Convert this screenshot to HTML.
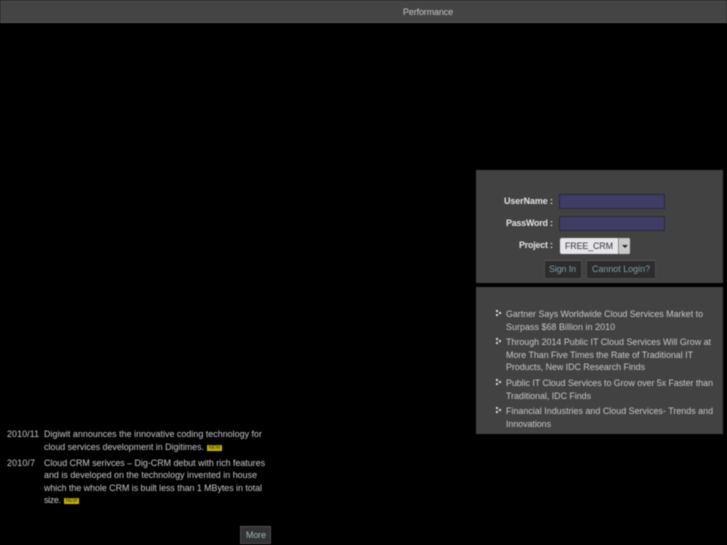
<!DOCTYPE html>
<html><head><meta charset="utf-8">
<style>
html,body{margin:0;padding:0;background:#000;}
body{width:727px;height:545px;position:relative;overflow:hidden;font-family:"Liberation Sans",sans-serif;filter:blur(.4px);}
.b{position:absolute;}
.n{position:absolute;width:15px;height:6px;line-height:6px;background:#c8b400;font-size:5px;font-weight:bold;color:#5c5200;text-align:center;overflow:hidden;}
.btn{position:absolute;background:#2c2c2c;border:1px solid #4a4a4a;border-top-color:#555;box-sizing:border-box;}
.d{position:absolute;width:2px;height:2px;background:#ddd;}
svg{position:absolute;left:0;top:0;}
text{font-family:"Liberation Sans",sans-serif;font-size:8.9px;fill:#c8c8c8;}
.lb{font-weight:bold;fill:#e4e4e4;}
.bt{fill:#7f9fa8;}
</style></head><body>
<div class="b" style="left:0;top:0;width:727px;height:22px;background:#444;border-bottom:1px solid #5a5a5a;"></div>

<div class="b" style="left:476px;top:170px;width:247px;height:113px;background:#424242;"></div>
<div class="b" style="left:559px;top:194px;width:106px;height:15px;background:#3f3d66;border:1px solid #2a2a3a;box-sizing:border-box;"></div>
<div class="b" style="left:559px;top:216px;width:106px;height:15px;background:#3f3d66;border:1px solid #2a2a3a;box-sizing:border-box;"></div>
<div class="b" style="left:560px;top:238px;width:70px;height:16px;background:#e6e6ea;border-radius:2px;"></div>
<div class="b" style="left:618px;top:238px;width:12px;height:16px;background:#c8c8c8;border-left:1px solid #888;box-sizing:border-box;border-radius:0 2px 2px 0;"></div>
<div class="b" style="left:622px;top:245px;width:0;height:0;border-left:3px solid transparent;border-right:3px solid transparent;border-top:3px solid #222;"></div>
<div class="btn" style="left:544px;top:260px;width:38px;height:19px;"></div>
<div class="btn" style="left:586px;top:260px;width:70px;height:19px;"></div>

<div class="b" style="left:476px;top:287px;width:247px;height:147px;background:#424242;"></div>
<div class="d" style="left:496px;top:310px;"></div><div class="d" style="left:499px;top:312px;"></div><div class="d" style="left:496px;top:314px;"></div>
<div class="d" style="left:496px;top:338px;"></div><div class="d" style="left:499px;top:340px;"></div><div class="d" style="left:496px;top:342px;"></div>
<div class="d" style="left:496px;top:379px;"></div><div class="d" style="left:499px;top:381px;"></div><div class="d" style="left:496px;top:383px;"></div>
<div class="d" style="left:496px;top:407px;"></div><div class="d" style="left:499px;top:409px;"></div><div class="d" style="left:496px;top:411px;"></div>

<div class="n" style="left:207px;top:445px;">NEW</div>
<div class="n" style="left:64px;top:498px;">NEW</div>
<div class="btn" style="left:240px;top:526px;width:31px;height:18px;background:#333;"></div>

<svg width="727" height="545">
<text x="403" y="15" textLength="50">Performance</text>
<text class="lb" x="504" y="204" textLength="49">UserName :</text>
<text class="lb" x="506" y="226" textLength="47">PassWord :</text>
<text class="lb" x="519" y="248" textLength="34">Project :</text>
<text x="565" y="249" textLength="48" style="fill:#333;">FREE_CRM</text>
<text class="bt" x="549" y="272" textLength="27">Sign In</text>
<text class="bt" x="592" y="272" textLength="58">Cannot Login?</text>
<text x="506" y="317" textLength="197">Gartner Says Worldwide Cloud Services Market to</text>
<text x="506" y="330" textLength="109">Surpass $68 Billion in 2010</text>
<text x="506" y="345" textLength="205">Through 2014 Public IT Cloud Services Will Grow at</text>
<text x="506" y="358" textLength="187">More Than Five Times the Rate of Traditional IT</text>
<text x="506" y="370" textLength="139">Products, New IDC Research Finds</text>
<text x="506" y="386" textLength="207">Public IT Cloud Services to Grow over 5x Faster than</text>
<text x="506" y="399" textLength="85">Traditional, IDC Finds</text>
<text x="506" y="414" textLength="207">Financial Industries and Cloud Services- Trends and</text>
<text x="506" y="427" textLength="45">Innovations</text>
<text x="7" y="437" textLength="32">2010/11</text>
<text x="44" y="437" textLength="218">Digiwit announces the innovative coding technology for</text>
<text x="44" y="450" textLength="160">cloud services development in Digitimes.</text>
<text x="7" y="466" textLength="28">2010/7</text>
<text x="44" y="466" textLength="221">Cloud CRM serivces – Dig-CRM debut with rich features</text>
<text x="44" y="478" textLength="213">and is developed on the technology invented in house</text>
<text x="44" y="491" textLength="218">which the whole CRM is built less than 1 MBytes in total</text>
<text x="44" y="503" textLength="17">size.</text>
<text x="246" y="538" textLength="20" style="fill:#9fb4bc;">More</text>
</svg>
</body></html>
